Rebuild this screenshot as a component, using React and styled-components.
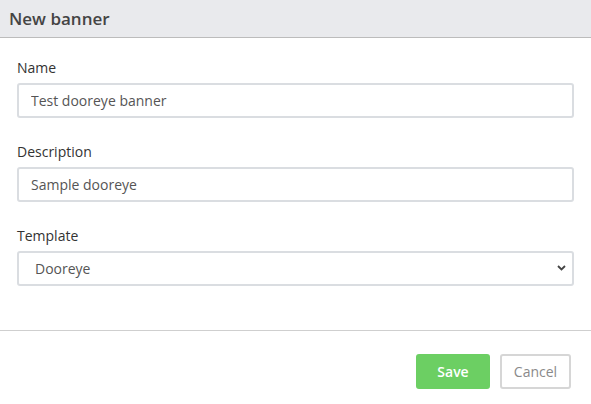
import React, { useState } from 'react';
import styled, { createGlobalStyle } from 'styled-components';

const GlobalStyle = createGlobalStyle`
  body {
    margin: 0;
    background: #fff;
    font-family: "Open Sans", "Liberation Sans", sans-serif;
  }
`;

const Modal = styled.div`
  width: 591px;
  background: #fff;
`;

const Header = styled.div`
  height: 37px;
  display: flex;
  align-items: center;
  padding: 0 9px;
  background: #e9eaed;
  border-bottom: 1px solid #bcbcbc;
  color: #444;
  font-size: 17px;
  font-weight: 600;
`;

const Body = styled.div`
  padding: 20px 17px 44px;
  display: flex;
  flex-direction: column;
  gap: 24px;
  border-bottom: 1px solid #cfcfcf;
`;

const Field = styled.div`
  display: flex;
  flex-direction: column;
  gap: 5px;
`;

const Label = styled.label`
  font-size: 14px;
  line-height: 20px;
  color: #333;
`;

const Input = styled.input`
  box-sizing: border-box;
  width: 100%;
  height: 35px;
  padding: 0 12px;
  border: 2px solid #dadde1;
  border-radius: 3px;
  font-family: inherit;
  font-size: 14px;
  color: #555;
  outline: none;
`;

const SelectWrap = styled.div`
  position: relative;
`;

const Select = styled.select`
  box-sizing: border-box;
  width: 100%;
  height: 35px;
  padding: 0 16px;
  border: 2px solid #dadde1;
  border-radius: 3px;
  font-family: inherit;
  font-size: 14px;
  color: #555;
  background: #fff;
  appearance: none;
  outline: none;
`;

const Chevron = styled.svg`
  position: absolute;
  right: 8px;
  top: 14px;
  pointer-events: none;
`;

const Footer = styled.div`
  display: flex;
  justify-content: flex-end;
  gap: 10px;
  padding: 23px 20px 15px;
`;

const Button = styled.button`
  box-sizing: border-box;
  height: 35px;
  width: ${p => (p.$primary ? '74px' : '71px')};
  padding: 0;
  border-radius: 3px;
  border: 2px solid ${p => (p.$primary ? '#6ccf63' : '#d6d6d6')};
  background: ${p => (p.$primary ? '#6ccf63' : '#fff')};
  color: ${p => (p.$primary ? '#fff' : '#8a8a8a')};
  font-family: inherit;
  font-size: 14px;
  font-weight: ${p => (p.$primary ? 600 : 400)};
  cursor: pointer;
`;

const App = () => {
  const [data, setData] = useState({
    name: 'Test dooreye banner',
    description: 'Sample dooreye',
    template: 'Dooreye'
  });

  return (
    <>
      <GlobalStyle />
      <Modal>
        <Header>New banner</Header>
        <Body>
          <Field>
            <Label>Name</Label>
            <Input
              value={data.name}
              onChange={e => setData({ ...data, name: e.target.value })}
            />
          </Field>
          <Field>
            <Label>Description</Label>
            <Input
              value={data.description}
              onChange={e => setData({ ...data, description: e.target.value })}
            />
          </Field>
          <Field>
            <Label>Template</Label>
            <SelectWrap>
              <Select
                value={data.template}
                onChange={e => setData({ ...data, template: e.target.value })}
              >
                <option>Dooreye</option>
              </Select>
              <Chevron width="9" height="6" viewBox="0 0 9 6">
                <path d="M1 1l3.5 3.5L8 1" fill="none" stroke="#444" strokeWidth="1.8" />
              </Chevron>
            </SelectWrap>
          </Field>
        </Body>
        <Footer>
          <Button $primary>Save</Button>
          <Button>Cancel</Button>
        </Footer>
      </Modal>
    </>
  );
};

export default App;
